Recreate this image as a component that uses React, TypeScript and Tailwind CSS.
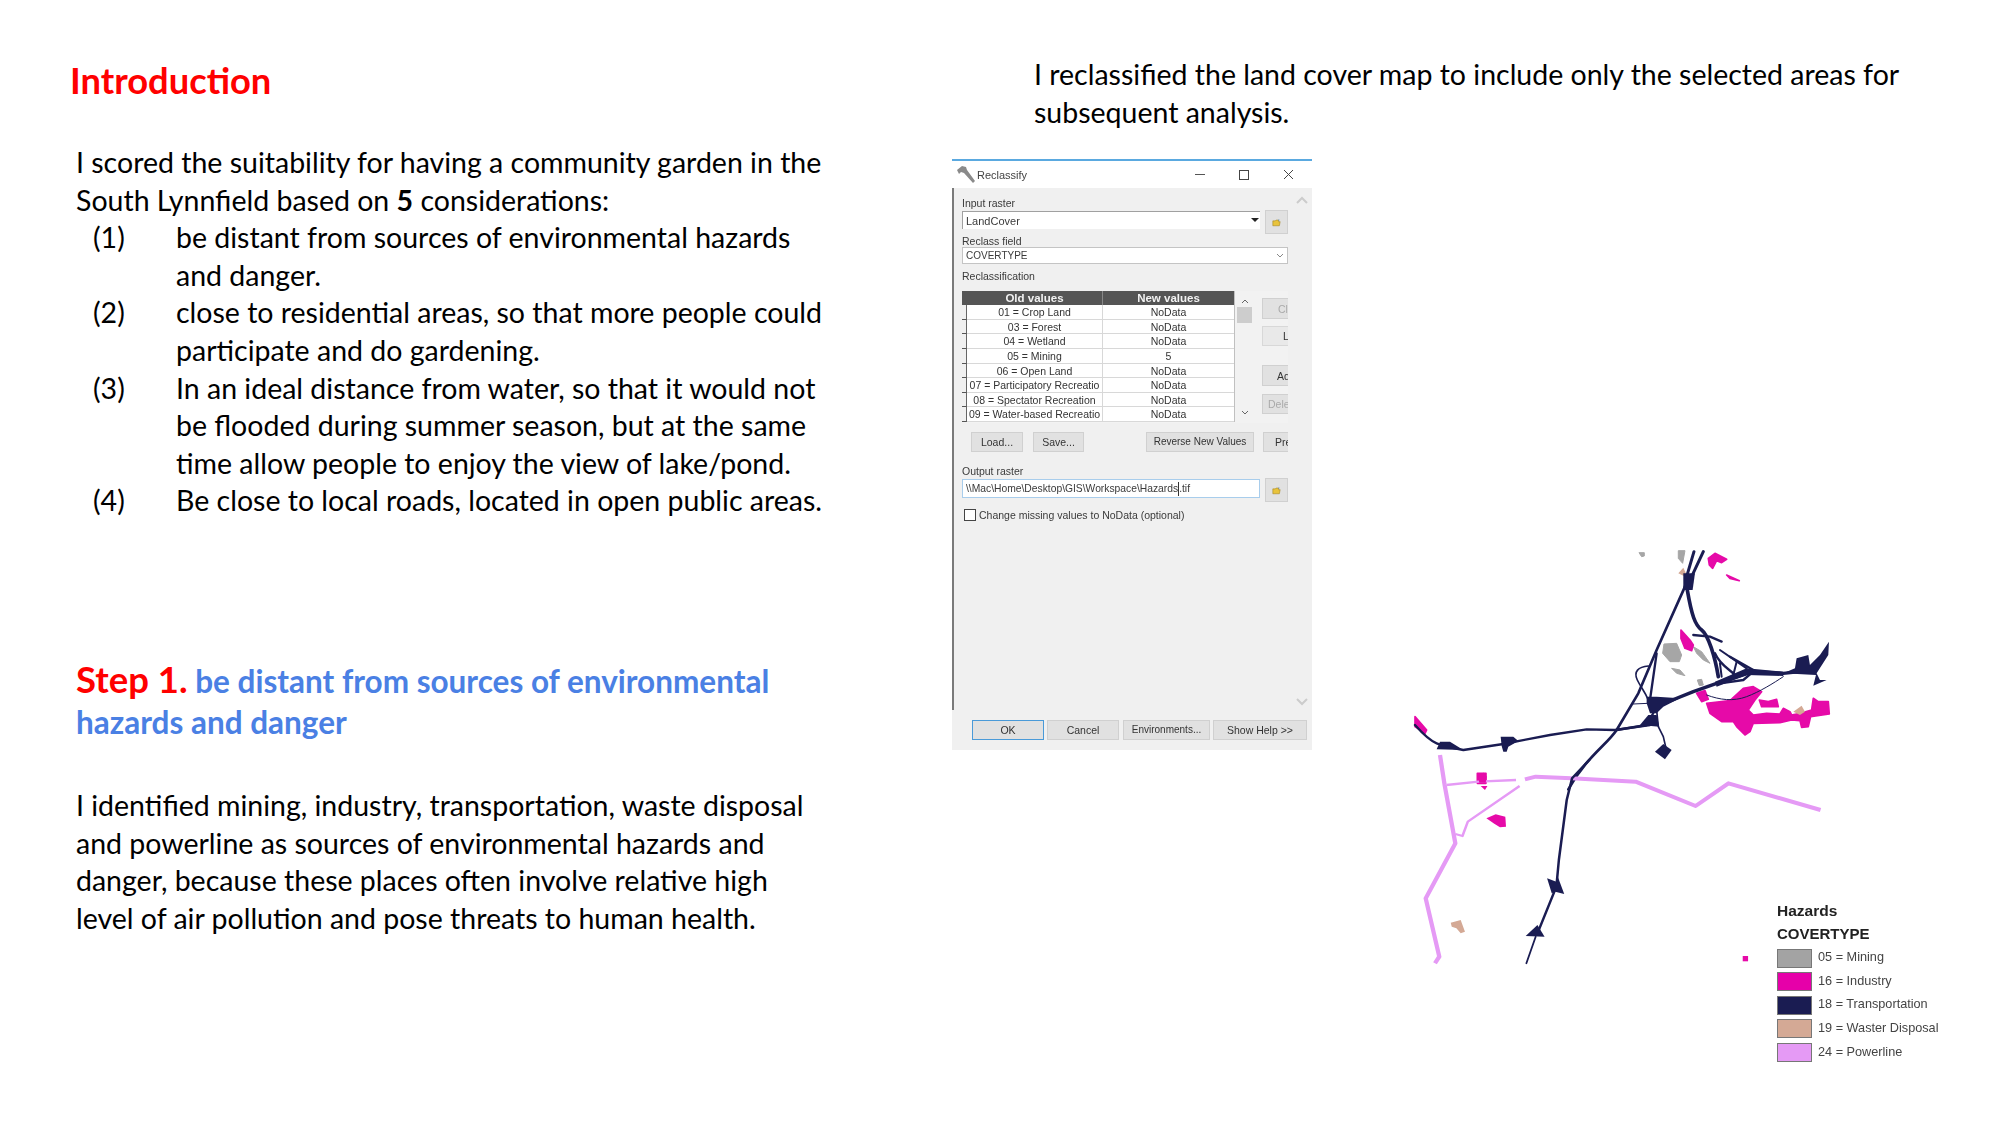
import React from 'react';

const rows = [
  ['01 = Crop Land', 'NoData'],
  ['03 = Forest', 'NoData'],
  ['04 = Wetland', 'NoData'],
  ['05 = Mining', '5'],
  ['06 = Open Land', 'NoData'],
  ['07 = Participatory Recreatio', 'NoData'],
  ['08 = Spectator Recreation', 'NoData'],
  ['09 = Water-based Recreatio', 'NoData'],
];

const legend = [
  ['bg-[#a3a3a3]', '05 = Mining'],
  ['bg-[#e600a9]', '16 = Industry'],
  ['bg-[#1a1c52]', '18 = Transportation'],
  ['bg-[#d4a995]', '19 = Waster Disposal'],
  ['bg-[#e59af5]', '24 = Powerline'],
];

function Folder() {
  return (
    <svg width="9" height="9" viewBox="0 0 11 10">
      <path d="M1 3h3l1-1h3v2h2L9 9H1z" fill="#e8c33c" stroke="#9a7a10" strokeWidth="0.6" />
      <path d="M8 1l1.5 1L8 3" fill="#3c7fc4" />
    </svg>
  );
}

function Btn({ className, children }: { className: string; children?: React.ReactNode }) {
  return (
    <div className={`flex flex-none items-center justify-center overflow-hidden whitespace-nowrap border border-[#d0d0d0] bg-[#e1e1e1] text-[#333] ${className}`}>
      {children}
    </div>
  );
}

function Dialog() {
  return (
    <div className="flex h-[591px] w-[360px] flex-none flex-col overflow-hidden bg-white font-['Liberation_Sans',sans-serif] text-[10.5px] leading-[14px] text-[#3a3a3a] blur-[0.35px]">
      <div className="flex h-[29px] flex-none items-center border-t-2 border-[#5aa9e0] pl-[5px]">
        <svg width="18" height="17" viewBox="0 0 18 17">
          <path d="M0 4 5 0l4 1 1 3 8 11-2 2-9-10-3-1-2 2z" fill="#8a8a8a" />
        </svg>
        <span className="ml-[2px] text-[11px] text-[#444]">Reclassify</span>
        <span className="ml-[168px] h-[1px] w-[10px] bg-[#555]" />
        <span className="ml-[34px] h-[10px] w-[10px] border border-[#444]" />
        <svg className="ml-[34px]" width="11" height="11" viewBox="0 0 11 11">
          <path d="M1 1l9 9M10 1l-9 9" stroke="#444" strokeWidth="1" />
        </svg>
      </div>
      <div className="relative flex h-[522px] flex-none flex-col border-l-2 border-[#7a7a7a] bg-[#f0f0f0] pl-[8px] pt-[8px]">
        <svg className="absolute left-[342px] top-[8px]" width="12" height="8" viewBox="0 0 12 8">
          <path d="M1 7l5-5 5 5" fill="none" stroke="#ccc" strokeWidth="2" />
        </svg>
        <svg className="absolute left-[342px] top-[510px]" width="12" height="8" viewBox="0 0 12 8">
          <path d="M1 1l5 5 5-5" fill="none" stroke="#ccc" strokeWidth="2" />
        </svg>
        <div className="w-[326px] overflow-hidden">
          <div className="h-[14px]">Input raster</div>
          <div className="flex h-[24px] items-start">
            <div className="relative mt-[1px] flex h-[18px] w-[298px] items-center border-l border-t border-[#a0a0a0] bg-white pl-[3px] text-[11px]">
              LandCover
              <span className="absolute right-[1px] top-[6px] h-0 w-0 border-x-[4px] border-t-[4px] border-x-transparent border-t-[#222]" />
            </div>
            <Btn className="ml-[5px] h-[24px] w-[23px]"><Folder /></Btn>
          </div>
          <div className="h-[13px]">Reclass field</div>
          <div className="relative flex h-[17px] w-[326px] items-center border border-[#c4c4c4] bg-white pl-[3px] text-[10px]">
            COVERTYPE
            <svg className="absolute right-[3px] top-[5px]" width="8" height="6" viewBox="0 0 8 6">
              <path d="M1 1l3 3 3-3" fill="none" stroke="#888" />
            </svg>
          </div>
          <div className="mt-[5px] h-[14px]">Reclassification</div>
          <div className="mt-[8px] flex h-[132px] bg-[#f2f2f2]">
            <div className="h-[131px] w-[273px] flex-none border-b border-r border-[#c0c0c0] bg-white">
              <div className="flex h-[14px] bg-[#555] pl-[5px] text-[11.5px] font-bold leading-[14px] text-[#f2f2f2]">
                <div className="w-[136px] border-r border-[#888] text-center">Old values</div>
                <div className="flex-1 text-center">New values</div>
              </div>
              {rows.map(([a, b]) => (
                <div key={a} className="flex h-[14.65px] text-[#333]">
                  <div className="h-full w-[5px] flex-none border-b border-r border-b-[#555] border-r-[#666] bg-[#f0f0f0]" />
                  <div className="h-full w-[136px] flex-none whitespace-nowrap border-b border-r border-[#d8d8d8] text-center leading-[14px]">{a}</div>
                  <div className="h-full flex-1 border-b border-[#d8d8d8] text-center leading-[14px]">{b}</div>
                </div>
              ))}
            </div>
            <div className="relative ml-[2px] h-[131px] w-[16px] flex-none">
              <svg className="absolute left-[4px] top-[7px]" width="8" height="6" viewBox="0 0 8 6">
                <path d="M1 5l3-3 3 3" fill="none" stroke="#666" />
              </svg>
              <div className="absolute left-0 top-[16px] h-[16px] w-[15px] bg-[#cdcdcd]" />
              <svg className="absolute left-[4px] top-[119px]" width="8" height="6" viewBox="0 0 8 6">
                <path d="M1 1l3 3 3-3" fill="none" stroke="#666" />
              </svg>
            </div>
            <div className="ml-[9px] flex w-[26px] flex-none flex-col items-start overflow-hidden pt-[7px]">
              <Btn className="h-[21px] w-[34px] !justify-start pl-[15px] text-[#aaa]">Cl</Btn>
              <Btn className="mt-[7px] h-[20px] w-[34px] !justify-start !border-[#d8d8d8] !bg-[#e9e9e9] pl-[20px]">L</Btn>
              <Btn className="mt-[19px] h-[21px] w-[34px] !justify-start pl-[14px]">Ad</Btn>
              <Btn className="mt-[8px] h-[20px] w-[34px] !justify-start pl-[5px] text-[#aaa]">Dele</Btn>
            </div>
          </div>
          <div className="mt-[9px] flex h-[21px]">
            <Btn className="ml-[9px] h-[20px] w-[52px]">Load...</Btn>
            <Btn className="ml-[10px] h-[20px] w-[51px]">Save...</Btn>
            <Btn className="ml-[62px] h-[20px] w-[108px] text-[10px]">Reverse New Values</Btn>
            <Btn className="ml-[9px] h-[20px] w-[34px] !justify-start pl-[11px]">Pre</Btn>
          </div>
          <div className="mt-[11px] h-[14px]">Output raster</div>
          <div className="flex h-[25px] items-start">
            <div className="mt-[1px] flex h-[19px] w-[298px] items-center border border-[#a8cdec] bg-white pl-[3px] text-[10.3px]">
              \\Mac\Home\Desktop\GIS\Workspace\Hazards<span className="border-l border-[#333]">.tif</span>
            </div>
            <Btn className="ml-[5px] h-[24px] w-[23px]"><Folder /></Btn>
          </div>
          <div className="mt-[5px] flex h-[14px] items-center pl-[2px]">
            <span className="h-[12px] w-[12px] border border-[#444] bg-white" />
            <span className="ml-[3px] whitespace-nowrap">Change missing values to NoData (optional)</span>
          </div>
        </div>
      </div>
      <div className="flex h-[40px] flex-none items-start bg-[#f0f0f0] pl-[20px] pt-[10px]">
        <Btn className="h-[20px] w-[72px] !border-[#4a9ad8]">OK</Btn>
        <Btn className="ml-[3px] h-[20px] w-[72px]">Cancel</Btn>
        <Btn className="ml-[4px] h-[20px] w-[87px] text-[10px]">Environments...</Btn>
        <Btn className="ml-[3px] h-[20px] w-[94px]">Show Help &gt;&gt;</Btn>
      </div>
    </div>
  );
}

function HazardMap() {
  return (
    <div className="relative ml-[88px] mt-[381px] h-[440px] w-[560px] flex-none">
      <svg className="blur-[0.3px]" width="560" height="440" viewBox="1400 540 560 440">
        <g transform="translate(1400 540) scale(0.3333)">
          <g fill="#a6a6a6" stroke="#a6a6a6" strokeWidth="3" strokeLinejoin="round">
            <path d="M792 312 830 310 845 345 838 365 810 365 788 340Z" />
            <path d="M815 385 840 390 855 407 830 400Z" />
            <path d="M880 320 905 335 930 370 910 360 890 340Z" />
            <path d="M892 420 905 418 910 435 898 437Z" />
            <path d="M835 32 855 32 848 70 835 55Z" />
            <path d="M717 38 733 38 733 48 725 50Z" />
          </g>
          <g fill="#e60aa8" stroke="#e60aa8" strokeWidth="5" strokeLinejoin="round">
            <path d="M925 55 945 40 980 58 965 68 950 62 938 85 928 75Z" />
            <path d="M980 105 1018 122 990 115Z" />
            <path d="M843 270 870 300 880 315 875 332 855 325 843 295Z" />
            <path d="M890 460 915 452 925 478 905 485Z" />
            <path d="M920 490 990 482 1030 445 1060 440 1085 455 1065 480 1045 510 1060 525 1100 520 1140 522 1150 505 1170 515 1175 525 1200 520 1235 510 1240 475 1255 485 1285 485 1288 522 1232 530 1225 560 1205 562 1200 542 1175 540 1140 548 1060 550 1050 575 1035 585 1010 560 1000 545 965 545 930 520Z" />
            <path d="M1078 480 1105 485 1130 478 1135 500 1085 500Z" />
            <path d="M45 530 80 570 75 580 45 560Z" />
            <path d="M232 700 258 700 258 730 232 730Z" />
          </g>
          <g fill="#d4a995">
            <path d="M835 100 850 83 858 100 852 108Z" />
            <path d="M1180 515 1205 497 1215 515 1200 525Z" />
          </g>
          <g fill="none" stroke="#1a1c52" strokeLinejoin="round" strokeLinecap="round">
            <path strokeWidth="9" d="M882 35 860 110 855 145" />
            <path strokeWidth="9" d="M910 35 875 110 860 145" />
            <path strokeWidth="8" d="M855 140 770 330 715 460 650 570 C620 615 560 650 505 748" />
            <path strokeWidth="7" d="M770 340 750 480" />
            <path strokeWidth="11" d="M862 150 C875 225 885 255 905 270 S945 350 955 410" />
            <path strokeWidth="7" d="M880 285 930 290 965 305" />
            <path strokeWidth="7" d="M45 555 Q85 600 110 610 T190 630 L310 612 450 585 560 568 645 570 750 555" />
            <path strokeWidth="10" d="M780 495 880 455 950 430 1060 395 1150 400 1200 395" />
            <path strokeWidth="7" d="M945 340 C960 375 990 390 1000 400 S975 425 960 430" />
            <path strokeWidth="6" d="M960 330 1040 385" />
            <path strokeWidth="7" d="M990 350 1060 390" />
            <path strokeWidth="7" d="M960 430 1030 420 1060 395" />
            <path strokeWidth="6" d="M960 370 965 410" />
            <path strokeWidth="6" d="M1010 365 1000 405" />
            <path strokeWidth="5" d="M745 378 C715 380 700 395 712 420 S735 455 745 480" />
            <path strokeWidth="5" d="M770 510 775 560 790 590 797 620" />
            <path strokeWidth="7" d="M650 570 740 555 765 510" />
            <path strokeWidth="3" d="M700 492 745 490" />
            <path strokeWidth="3" d="M920 465 C960 480 1000 485 1040 470 S1120 430 1150 410" />
          </g>
          <g fill="#1a1c52">
            <path d="M850 100 885 100 878 150 850 150Z" />
            <path d="M110 628 120 605 150 605 190 630Z" />
            <path d="M302 590 340 590 355 603 325 620 320 635 310 635 305 618Z" />
            <path d="M740 470 770 470 840 475 790 500 770 520 750 520 740 490Z" />
            <path d="M720 555 745 525 770 525 778 560Z" />
            <path d="M790 612 815 630 795 658 765 635Z" />
            <path d="M1040 385 1150 395 1150 408 1040 405 950 440 945 425Z" />
            <path d="M1150 400 1185 385 1190 355 1225 345 1230 375 1260 345 1287 305 1285 345 1250 400 1260 420 1280 420 1240 437 1248 405Z" />
          </g>
        </g>
        <g transform="translate(1400 760) scale(0.357 0.3333)">
          <g fill="none" stroke="#e59af5" strokeLinejoin="round">
            <path strokeWidth="12" d="M112 -15 125 75 155 250 72 415 110 590 98 610" />
            <path strokeWidth="7" d="M130 75 220 65 325 60" />
            <path strokeWidth="12" d="M350 58 380 50 480 55 660 65 828 138 920 70 1178 150" />
            <path strokeWidth="7" d="M335 78 190 185 175 228 155 222" />
          </g>
          <g fill="#e60aa8">
            <path d="M218 42 235 38 243 50 240 68 222 68Z" />
            <path d="M226 78 245 78 238 90Z" />
            <path d="M242 175 268 163 295 170 297 200 280 202 262 190Z" />
            <path d="M960 588 975 588 975 604 960 604Z" />
          </g>
          <path fill="#d4a995" d="M142 488 170 480 182 515 170 520 158 505 145 500Z" />
          <g fill="none" stroke="#1a1c52" strokeLinejoin="round" strokeLinecap="round">
            <path strokeWidth="7" d="M530 0 482 55 467 120 445 300 438 380 385 520" />
            <path strokeWidth="5" d="M380 530 354 610" />
          </g>
          <g fill="#1a1c52">
            <path d="M412 355 438 365 442 350 460 402 435 395 425 400Z" />
            <path d="M352 528 385 495 405 530Z" />
          </g>
        </g>
      </svg>
      <div className="absolute left-[377px] top-[360px] font-['Liberation_Sans',sans-serif] blur-[0.25px]">
        <div className="text-[15.5px] font-bold leading-[22px] text-[#222]">Hazards</div>
        <div className="text-[15px] font-bold leading-[24px] text-[#222]">COVERTYPE</div>
        <div className="mt-[2.5px] flex flex-col gap-[4.6px]">
          {legend.map(([swatch, label]) => (
            <div key={label} className="flex h-[19px] items-center text-[12.7px] text-[#444]">
              <span className={`h-[19px] w-[35px] border border-[#777] ${swatch}`} />
              <span className="ml-[6px] whitespace-nowrap">{label}</span>
            </div>
          ))}
        </div>
      </div>
    </div>
  );
}

function Item({ n, children }: { n: string; children: React.ReactNode }) {
  return (
    <div className="flex">
      <div className="w-[100px] flex-none pl-[17px]">{n}</div>
      <div>{children}</div>
    </div>
  );
}

export default function App() {
  return (
    <div className="flex h-[1125px] w-[2000px] overflow-hidden bg-white font-['Lato',sans-serif] text-[28.5px] leading-[37.6px] text-black">
      <div className="w-[952px] flex-none pl-[76px] pt-[55px]">
        <div className="-ml-[6px] text-[36.3px] font-bold leading-[50px] text-[#ff0000]">Introduction</div>
        <div className="mt-[39px]">
          I scored the suitability for having a community garden in the<br />
          South Lynnfield based on <b>5</b> considerations:
        </div>
        <Item n="(1)">be distant from sources of environmental hazards<br />and danger.</Item>
        <Item n="(2)">close to residential areas, so that more people could<br />participate and do gardening.</Item>
        <Item n="(3)">In an ideal distance from water, so that it would not<br />be flooded during summer season, but at the same<br />time allow people to enjoy the view of lake/pond.</Item>
        <Item n="(4)">Be close to local roads, located in open public areas.</Item>
        <div className="mt-[139px] text-[31.5px] font-bold leading-[41px] text-[#4a80e4]">
          <span className="text-[36.5px] text-[#ff0000]">Step 1.</span> be distant from sources of environmental<br />
          hazards and danger
        </div>
        <div className="mt-[44px]">
          I identified mining, industry, transportation, waste disposal<br />
          and powerline as sources of environmental hazards and<br />
          danger, because these places often involve relative high<br />
          level of air pollution and pose threats to human health.
        </div>
      </div>
      <div className="flex-1">
        <div className="h-[159px] pl-[82px] pt-[56px]">
          I reclassified the land cover map to include only the selected areas for<br />
          subsequent analysis.
        </div>
        <div className="flex items-start">
          <Dialog />
          <HazardMap />
        </div>
      </div>
    </div>
  );
}
